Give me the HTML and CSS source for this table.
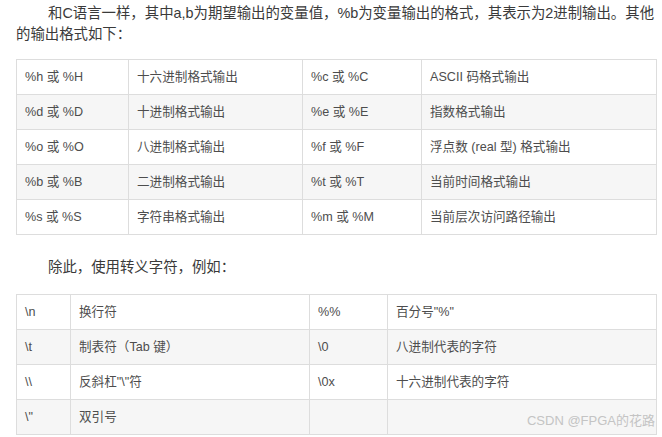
FILE: index.html
```html
<!DOCTYPE html>
<html lang="zh-CN">
<head>
<meta charset="utf-8">
<title>格式输出</title>
<link rel="stylesheet" href="styles.css">
</head>
<body>
<div class="article">
  <p class="para first">和C语言一样，其中a,b为期望输出的变量值，%b为变量输出的格式，其表示为2进制输出。其他的输出格式如下：</p>
  <table class="grid fmt">
    <colgroup><col class="c1"><col class="c2"><col class="c3"><col class="c4"></colgroup>
    <tbody>
      <tr><td>%h 或 %H</td><td>十六进制格式输出</td><td>%c 或 %C</td><td>ASCII 码格式输出</td></tr>
      <tr><td>%d 或 %D</td><td>十进制格式输出</td><td>%e 或 %E</td><td>指数格式输出</td></tr>
      <tr><td>%o 或 %O</td><td>八进制格式输出</td><td>%f 或 %F</td><td>浮点数 (real 型) 格式输出</td></tr>
      <tr><td>%b 或 %B</td><td>二进制格式输出</td><td>%t 或 %T</td><td>当前时间格式输出</td></tr>
      <tr><td>%s 或 %S</td><td>字符串格式输出</td><td>%m 或 %M</td><td>当前层次访问路径输出</td></tr>
    </tbody>
  </table>
  <p class="para second">除此，使用转义字符，例如：</p>
  <div class="wrap">
    <table class="grid esc">
      <colgroup><col class="e1"><col class="e2"><col class="e3"><col class="e4"></colgroup>
      <tbody>
        <tr><td>\n</td><td>换行符</td><td>%%</td><td>百分号"%"</td></tr>
        <tr><td>\t</td><td>制表符（Tab 键）</td><td>\0</td><td>八进制代表的字符</td></tr>
        <tr><td>\\</td><td>反斜杠"\"符</td><td>\0x</td><td>十六进制代表的字符</td></tr>
        <tr><td>\"</td><td>双引号</td><td></td><td></td></tr>
      </tbody>
    </table>
    <span class="watermark">CSDN @FPGA的花路</span>
  </div>
</div>
</body>
</html>
```

FILE: styles.css
```css
html, body {
  margin: 0;
  padding: 0;
  background: #ffffff;
}

body {
  font-family: "Liberation Sans", "Noto Sans CJK SC", sans-serif;
  font-size: 14px;
  color: #4d4d4d;
}

.article {
  width: 640px;
  padding: 3px 0 0 16px;
}

.para {
  margin: 0;
  font-size: 14.4px;
  line-height: 20.5px;
  text-indent: 32px;
  color: #3a3a3a;
}

.para.second {
  margin-top: 22px;
}

.grid {
  width: 640px;
  border-collapse: collapse;
  table-layout: fixed;
  margin-top: 15px;
}

.grid td {
  border: 1px solid #dddddd;
  height: 35px;
  padding: 0 8px;
  box-sizing: border-box;
  font-size: 12.6px;
  line-height: 18px;
  vertical-align: middle;
  white-space: nowrap;
  color: #4d4d4d;
}

.grid tr:nth-child(even) td {
  background: #f6f6f6;
}

.fmt .c1 { width: 112px; }
.fmt .c2 { width: 174px; }
.fmt .c3 { width: 119px; }
.fmt .c4 { width: 235px; }

.esc .e1 { width: 54px; }
.esc .e2 { width: 239px; }
.esc .e3 { width: 78px; }
.esc .e4 { width: 269px; }

.wrap {
  position: relative;
  width: 640px;
}

.wrap .grid {
  margin-top: 16px;
}

.watermark {
  position: absolute;
  right: 1px;
  bottom: 6px;
  font-size: 13px;
  color: #c4c4c4;
}
```
